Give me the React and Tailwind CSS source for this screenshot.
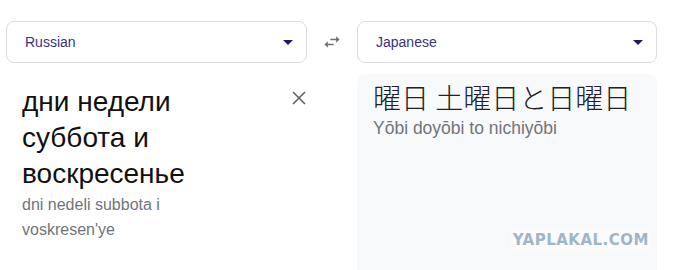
// App.jsx
// Translate panel — source/target language pickers, source text and translation

const SANS = { fontFamily: '"Liberation Sans", Arial, sans-serif' }

function LangSelect({ label }) {
  return (
    <div className="flex h-[42px] items-center justify-between rounded-lg border border-[#dadce0] bg-white pl-[18px] pr-[12px]">
      <span className="text-[14px] text-[#3b3378]">{label}</span>
      <svg width="10" height="5" viewBox="0 0 10 5" className="mr-[1px]">
        <path d="M0 0h10L5 5z" fill="#1f1a66" />
      </svg>
    </div>
  )
}

export default function App() {
  return (
    <div className="h-[270px] w-[676px] overflow-hidden bg-white" style={SANS}>
      {/* Language pickers */}
      <div className="grid grid-cols-[301px_50px_300px] pl-[6px] pt-[21px]">
        <LangSelect label="Russian" />
        <div className="flex items-center justify-center">
          <svg width="20" height="20" viewBox="0 0 24 24">
            <path
              d="M6.99 11L3 15l3.99 4v-3H14v-2H6.99v-3zM21 9l-3.99-4v3H10v2h7.01v3L21 9z"
              fill="#6b6f73"
            />
          </svg>
        </div>
        <LangSelect label="Japanese" />
      </div>

      {/* Source and translation */}
      <div className="mt-[11px] grid grid-cols-[301px_50px_300px] pl-[6px]">
        <div className="flex justify-between pl-[16px] pt-[10px]">
          <div className="w-[200px]">
            <div className="text-[28px] leading-[36px] text-[#111]">дни недели суббота и воскресенье</div>
            <div className="text-[16px] leading-[25px] text-[#70757a]">dni nedeli subbota i voskresen'ye</div>
          </div>
          <svg width="14" height="14" viewBox="0 0 14 14" className="mr-[1px] mt-[7px]">
            <path d="M1 1l12 12M13 1L1 13" stroke="#5f6368" strokeWidth="1.6" />
          </svg>
        </div>
        <div />
        <div className="relative h-[200px] rounded-t-lg bg-[#f8f9fa] pl-[16px] pt-[3px]">
          <div
            className="text-[28px] font-light leading-[40px] text-[#202124]"
            style={{ fontFamily: '"Noto Sans CJK JP", sans-serif' }}
          >
            曜日 土曜日と日曜日
          </div>
          <div className="text-[17.5px] leading-[22px] text-[#70757a]">Yōbi doyōbi to nichiyōbi</div>
          <div
            className="absolute bottom-[23px] right-[6px] bg-white/40 px-[2px] text-[15px] font-bold tracking-[0.5px] text-[#9db6cb]"
            style={{ fontFamily: '"DejaVu Sans", sans-serif' }}
          >
            YAPLAKAL.COM
          </div>
        </div>
      </div>
    </div>
  )
}
